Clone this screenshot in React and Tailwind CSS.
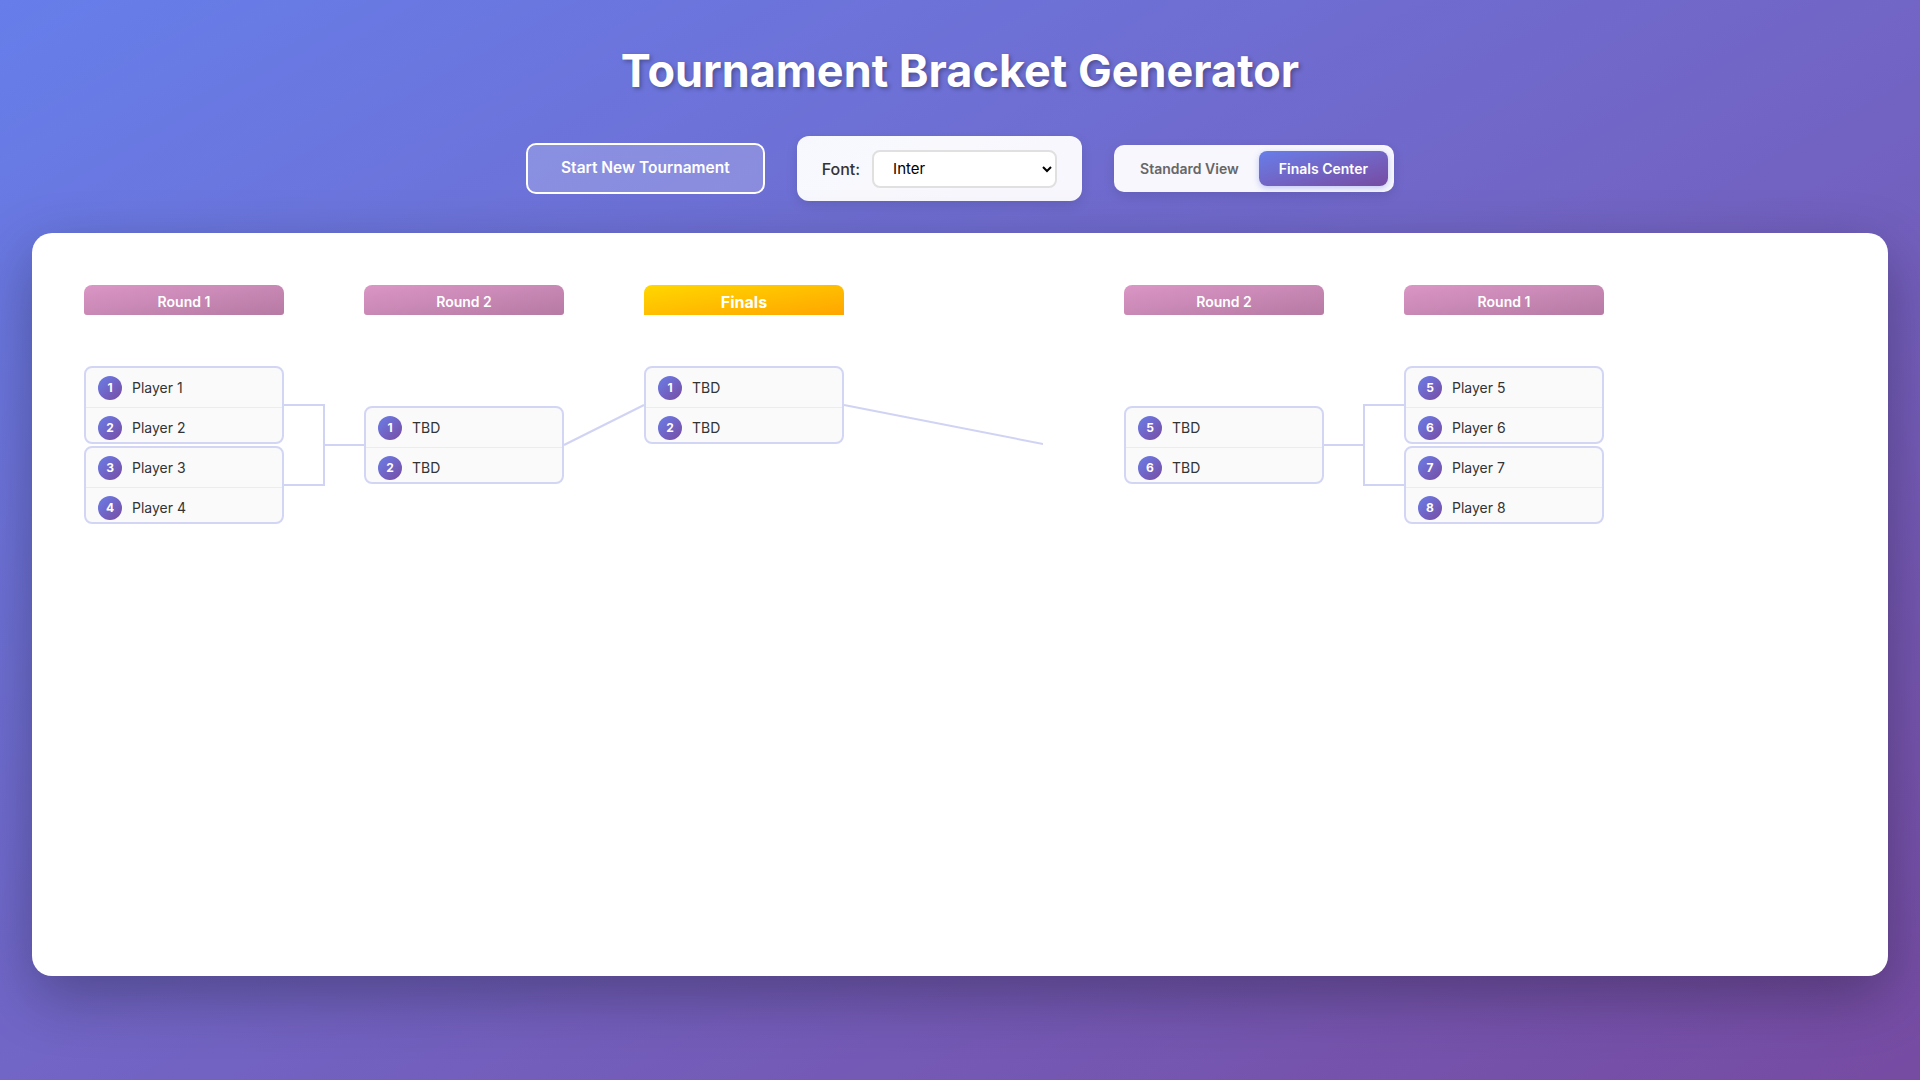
import React, { useState } from "react";

const leftRounds = [
    {
        title: "Round 1",
        offset: "mt-[51px]",
        matches: [
            [
                { seed: 1, name: "Player 1" },
                { seed: 2, name: "Player 2" },
            ],
            [
                { seed: 3, name: "Player 3" },
                { seed: 4, name: "Player 4" },
            ],
        ],
    },
    {
        title: "Round 2",
        offset: "mt-[91px]",
        matches: [
            [
                { seed: 1, name: "TBD" },
                { seed: 2, name: "TBD" },
            ],
        ],
    },
];

const rightRounds = [
    {
        title: "Round 2",
        offset: "mt-[91px]",
        matches: [
            [
                { seed: 5, name: "TBD" },
                { seed: 6, name: "TBD" },
            ],
        ],
    },
    {
        title: "Round 1",
        offset: "mt-[51px]",
        matches: [
            [
                { seed: 5, name: "Player 5" },
                { seed: 6, name: "Player 6" },
            ],
            [
                { seed: 7, name: "Player 7" },
                { seed: 8, name: "Player 8" },
            ],
        ],
    },
];

function Match({ players }) {
    return (
        <div className="h-[78px] overflow-hidden rounded-lg border-2 border-[#d3d5f5] bg-[#fafafa]">
            {players.map((p) => (
                <div
                    key={p.seed + p.name}
                    className="flex h-[40px] shrink-0 items-center gap-[10px] border-b border-[#ececec] pl-3 pt-[1px]"
                >
                    <span className="flex h-6 w-6 items-center justify-center rounded-full bg-gradient-to-br from-[#667eea] to-[#764ba2] text-xs font-bold text-white">
                        {p.seed}
                    </span>
                    <span className="text-sm text-[#333]">{p.name}</span>
                </div>
            ))}
        </div>
    );
}

function RoundColumn({ round }) {
    return (
        <div className="w-[200px] shrink-0">
            <div className="flex h-[30px] items-center justify-center rounded-t-lg rounded-b-[3px] bg-gradient-to-br from-[#db96c6] to-[#b67aa4] pt-1 text-sm font-semibold text-white">
                {round.title}
            </div>
            <div className={`${round.offset} flex flex-col gap-[2px]`}>
                {round.matches.map((m, i) => (
                    <Match key={i} players={m} />
                ))}
            </div>
        </div>
    );
}

export default function App() {
    const [font, setFont] = useState("Inter");
    const [view, setView] = useState("finals");

    return (
        <div className="min-h-screen bg-gradient-to-br from-[#667eea] to-[#764ba2] px-8 pt-[44px] pb-10 font-['Inter',sans-serif]">
            <h1 className="mb-[38px] text-center text-[45px] font-bold leading-[54px] text-white [text-shadow:2px_2px_4px_rgba(0,0,0,0.3)]">
                Tournament Bracket Generator
            </h1>

            <div className="mb-8 flex h-[65px] items-center justify-center gap-8">
                <button className="rounded-[10px] border-2 border-white bg-white/20 px-[33px] py-[11px] pb-[13px] text-[15.5px] font-semibold text-white">
                    Start New Tournament
                </button>

                <div className="flex h-[65px] items-center gap-[12px] rounded-xl bg-white/95 px-[25px] shadow-[0_4px_12px_rgba(0,0,0,0.1)]">
                    <label className="text-base font-medium text-[#333]">Font:</label>
                    <select
                        value={font}
                        onChange={(e) => setFont(e.target.value)}
                        className="h-[38px] w-[185px] rounded-lg border-2 border-[#e0e0e0] bg-white pl-[15px] pr-2 text-[15px] text-black"
                    >
                        <option>Inter</option>
                        <option>Roboto</option>
                        <option>Lato</option>
                        <option>Open Sans</option>
                    </select>
                </div>

                <div className="flex items-center rounded-[10px] bg-white/95 p-[6px] shadow-[0_4px_12px_rgba(0,0,0,0.1)]">
                    <button
                        onClick={() => setView("standard")}
                        className={`h-[35px] rounded-lg px-5 text-sm font-semibold ${view === "standard" ? "bg-gradient-to-br from-[#667eea] to-[#764ba2] text-white" : "text-[#666]"}`}
                    >
                        Standard View
                    </button>
                    <button
                        onClick={() => setView("finals")}
                        className={`h-[35px] rounded-lg px-5 text-sm font-semibold ${view === "finals" ? "bg-gradient-to-br from-[#667eea] to-[#764ba2] text-white shadow-[0_2px_6px_rgba(102,126,234,0.4)]" : "text-[#666]"}`}
                    >
                        Finals Center
                    </button>
                </div>
            </div>

            <div className="relative h-[743px] rounded-[20px] bg-white p-[52px] shadow-[0_20px_60px_rgba(0,0,0,0.3)]">
                {/* connector lines */}
                <svg className="pointer-events-none absolute inset-0 h-full w-full" fill="none" stroke="#d0d3f3" strokeWidth="2">
                    <path d="M252 172 H292 V252 H252 M292 212 H332" />
                    <path d="M532 212 L612 172" />
                    <path d="M812 172 L1011 211" />
                    <path d="M1292 212 H1332 M1372 172 H1332 V252 H1372" />
                </svg>

                <div className="relative flex gap-20">
                    {leftRounds.map((r) => (
                        <RoundColumn key={"l" + r.title} round={r} />
                    ))}

                    <div className="w-[200px] shrink-0">
                        <div className="flex h-[30px] items-center justify-center rounded-t-lg bg-gradient-to-br from-[#ffd700] to-[#ffa500] pt-1 text-base font-bold text-white">
                            Finals
                        </div>
                        <div className="mt-[51px]">
                            <Match
                                players={[
                                    { seed: 1, name: "TBD" },
                                    { seed: 2, name: "TBD" },
                                ]}
                            />
                        </div>
                    </div>

                    <div className="w-[120px] shrink-0" />

                    {rightRounds.map((r) => (
                        <RoundColumn key={"r" + r.title} round={r} />
                    ))}
                </div>
            </div>
        </div>
    );
}
